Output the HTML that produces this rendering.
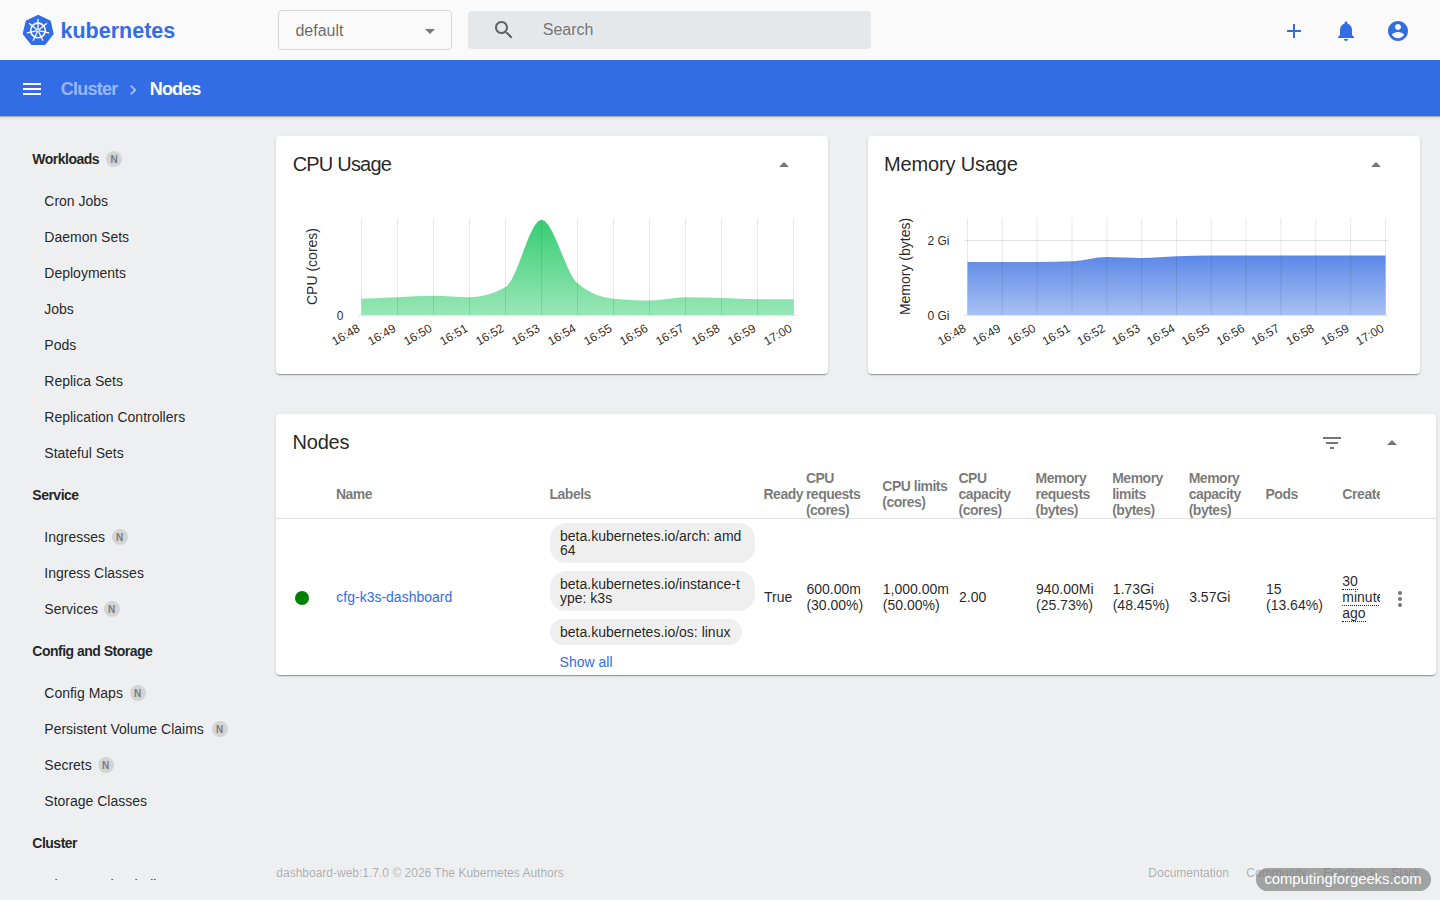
<!DOCTYPE html>
<html><head><meta charset="utf-8"><style>
html,body{margin:0;padding:0;width:1440px;height:900px;overflow:hidden;background:#eeeff1;font-family:"Liberation Sans", sans-serif;}
.t{position:absolute;white-space:nowrap;line-height:1;}
.badge{position:absolute;width:16px;height:16px;border-radius:50%;background:#d3d4d6;color:#7a7a7a;font-size:10px;font-weight:700;line-height:18px;box-sizing:border-box;overflow:hidden;text-align:center;}
</style></head><body>
<div style="position:absolute;left:0px;top:0px;width:1440px;height:60px;background:#fafafa"></div>
<svg style="position:absolute;left:0px;top:0px;" width="60" height="60" viewBox="0 0 60 60"><path d="M38.20,16.00 L49.61,21.50 L52.43,33.85 L44.53,43.75 L31.87,43.75 L23.97,33.85 L26.79,21.50Z" fill="#326de6" stroke="#326de6" stroke-width="2.4" stroke-linejoin="round"/><circle cx="38" cy="30.4" r="7.3" fill="none" stroke="#fff" stroke-width="1.6"/><line x1="38.00" y1="28.40" x2="38.00" y2="19.40" stroke="#fff" stroke-width="1.3" stroke-linecap="round"/><line x1="39.56" y1="29.15" x2="46.60" y2="23.54" stroke="#fff" stroke-width="1.3" stroke-linecap="round"/><line x1="39.95" y1="30.85" x2="48.72" y2="32.85" stroke="#fff" stroke-width="1.3" stroke-linecap="round"/><line x1="38.87" y1="32.20" x2="42.77" y2="40.31" stroke="#fff" stroke-width="1.3" stroke-linecap="round"/><line x1="37.13" y1="32.20" x2="33.23" y2="40.31" stroke="#fff" stroke-width="1.3" stroke-linecap="round"/><line x1="36.05" y1="30.85" x2="27.28" y2="32.85" stroke="#fff" stroke-width="1.3" stroke-linecap="round"/><line x1="36.44" y1="29.15" x2="29.40" y2="23.54" stroke="#fff" stroke-width="1.3" stroke-linecap="round"/><circle cx="38" cy="30.4" r="1.8" fill="#fff"/><circle cx="38" cy="30.4" r="0.8" fill="#326de6"/></svg>
<div class="t" style="left:60.5px;top:21.00px;font-size:21.5px;font-weight:700;color:#326de6;letter-spacing:0px;">kubernetes</div>
<div style="position:absolute;left:278px;top:10px;width:172px;height:38px;border:1px solid #d6d6d6;border-radius:4px;background:#fafafa"></div>
<div class="t" style="left:295.4px;top:23.00px;font-size:16px;font-weight:400;color:rgba(0,0,0,.6);letter-spacing:0px;">default</div>
<svg style="position:absolute;left:425px;top:29px;" width="10" height="5" viewBox="0 0 10 5"><path d="M0 0L10 0L5 5Z" fill="#777"/></svg>
<div style="position:absolute;left:468px;top:11px;width:403px;height:38px;background:#e4e8ea;border-radius:4px"></div>
<svg style="position:absolute;left:492px;top:18px;" width="24" height="24" viewBox="0 0 24 24"><path fill="#616161" d="M15.5 14h-.79l-.28-.27C15.41 12.59 16 11.11 16 9.5 16 5.91 13.09 3 9.5 3S3 5.91 3 9.5 5.91 16 9.5 16c1.61 0 3.09-.59 4.23-1.57l.27.28v.79l5 4.99L20.49 19l-4.99-5zm-6 0C7.01 14 5 11.99 5 9.5S7.01 5 9.5 5 14 7.01 14 9.5 11.99 14 9.5 14z"/></svg>
<div class="t" style="left:542.8px;top:22.00px;font-size:16px;font-weight:400;color:#757575;letter-spacing:0px;">Search</div>
<svg style="position:absolute;left:1282px;top:19px;" width="24" height="24" viewBox="0 0 24 24"><path fill="#326de6" d="M19 13h-6v6h-2v-6H5v-2h6V5h2v6h6v2z"/></svg>
<svg style="position:absolute;left:1334px;top:19px;" width="24" height="24" viewBox="0 0 24 24"><path fill="#326de6" d="M12 22c1.1 0 2-.9 2-2h-4c0 1.1.89 2 2 2zm6-6v-5c0-3.07-1.64-5.64-4.5-6.32V4c0-.83-.67-1.5-1.5-1.5s-1.5.67-1.5 1.5v.68C7.63 5.36 6 7.92 6 11v5l-2 2v1h16v-1l-2-2z"/></svg>
<svg style="position:absolute;left:1386px;top:19px;" width="24" height="24" viewBox="0 0 24 24"><path fill="#326de6" d="M12 2C6.48 2 2 6.48 2 12s4.48 10 10 10 10-4.48 10-10S17.52 2 12 2zm0 3c1.66 0 3 1.34 3 3s-1.34 3-3 3-3-1.34-3-3 1.34-3 3-3zm0 14.2c-2.5 0-4.71-1.28-6-3.22.03-1.99 4-3.08 6-3.08 1.99 0 5.97 1.09 6 3.08-1.29 1.94-3.5 3.22-6 3.22z"/></svg>
<div style="position:absolute;left:0px;top:60px;width:1440px;height:56px;background:#326de6;z-index:2"></div>
<div style="position:absolute;left:0px;top:116px;width:1440px;height:4px;background:linear-gradient(rgba(0,0,0,.4),rgba(0,0,0,.1) 30%,rgba(0,0,0,.03) 65%,rgba(0,0,0,0));z-index:2"></div>
<svg style="position:absolute;left:20px;top:77px;z-index:4" width="24" height="24" viewBox="0 0 24 24"><path fill="#fff" d="M3 18h18v-2H3v2zm0-5h18v-2H3v2zm0-7v2h18V6H3z"/></svg>
<div class="t" style="left:60.8px;top:80.00px;font-size:18px;font-weight:700;color:rgba(255,255,255,.5);letter-spacing:-0.75px;z-index:4">Cluster</div>
<svg style="position:absolute;left:122.5px;top:79.5px;z-index:4" width="20" height="20" viewBox="0 0 24 24"><path fill="rgba(255,255,255,.6)" d="M10 6L8.59 7.41 13.17 12l-4.58 4.59L10 18l6-6z"/></svg>
<div class="t" style="left:149.8px;top:80.00px;font-size:18px;font-weight:700;color:#fff;letter-spacing:-0.9px;z-index:4">Nodes</div>
<div class="t" style="left:32.3px;top:152.00px;font-size:14px;font-weight:700;color:rgba(0,0,0,.87);letter-spacing:-0.5px;">Workloads</div>
<div class="badge" style="left:106.0px;top:151px">N</div>
<div class="t" style="left:44.3px;top:194.00px;font-size:14px;font-weight:400;color:rgba(0,0,0,.87);letter-spacing:0px;">Cron Jobs</div>
<div class="t" style="left:44.3px;top:230.00px;font-size:14px;font-weight:400;color:rgba(0,0,0,.87);letter-spacing:0px;">Daemon Sets</div>
<div class="t" style="left:44.3px;top:266.00px;font-size:14px;font-weight:400;color:rgba(0,0,0,.87);letter-spacing:0px;">Deployments</div>
<div class="t" style="left:44.3px;top:302.00px;font-size:14px;font-weight:400;color:rgba(0,0,0,.87);letter-spacing:0px;">Jobs</div>
<div class="t" style="left:44.3px;top:338.00px;font-size:14px;font-weight:400;color:rgba(0,0,0,.87);letter-spacing:0px;">Pods</div>
<div class="t" style="left:44.3px;top:374.00px;font-size:14px;font-weight:400;color:rgba(0,0,0,.87);letter-spacing:0px;">Replica Sets</div>
<div class="t" style="left:44.3px;top:410.00px;font-size:14px;font-weight:400;color:rgba(0,0,0,.87);letter-spacing:0px;">Replication Controllers</div>
<div class="t" style="left:44.3px;top:446.00px;font-size:14px;font-weight:400;color:rgba(0,0,0,.87);letter-spacing:0px;">Stateful Sets</div>
<div class="t" style="left:32.3px;top:488.00px;font-size:14px;font-weight:700;color:rgba(0,0,0,.87);letter-spacing:-0.5px;">Service</div>
<div class="t" style="left:44.3px;top:530.00px;font-size:14px;font-weight:400;color:rgba(0,0,0,.87);letter-spacing:0px;">Ingresses</div>
<div class="badge" style="left:111.5px;top:529px">N</div>
<div class="t" style="left:44.3px;top:566.00px;font-size:14px;font-weight:400;color:rgba(0,0,0,.87);letter-spacing:0px;">Ingress Classes</div>
<div class="t" style="left:44.3px;top:602.00px;font-size:14px;font-weight:400;color:rgba(0,0,0,.87);letter-spacing:0px;">Services</div>
<div class="badge" style="left:103.5px;top:601px">N</div>
<div class="t" style="left:32.3px;top:644.00px;font-size:14px;font-weight:700;color:rgba(0,0,0,.87);letter-spacing:-0.5px;">Config and Storage</div>
<div class="t" style="left:44.3px;top:686.00px;font-size:14px;font-weight:400;color:rgba(0,0,0,.87);letter-spacing:0px;">Config Maps</div>
<div class="badge" style="left:129.7px;top:685px">N</div>
<div class="t" style="left:44.3px;top:722.00px;font-size:14px;font-weight:400;color:rgba(0,0,0,.87);letter-spacing:0px;">Persistent Volume Claims</div>
<div class="badge" style="left:211.5px;top:721px">N</div>
<div class="t" style="left:44.3px;top:758.00px;font-size:14px;font-weight:400;color:rgba(0,0,0,.87);letter-spacing:0px;">Secrets</div>
<div class="badge" style="left:97.7px;top:757px">N</div>
<div class="t" style="left:44.3px;top:794.00px;font-size:14px;font-weight:400;color:rgba(0,0,0,.87);letter-spacing:0px;">Storage Classes</div>
<div class="t" style="left:32.3px;top:836.00px;font-size:14px;font-weight:700;color:rgba(0,0,0,.87);letter-spacing:-0.5px;">Cluster</div>
<div style="position:absolute;left:0;top:0;width:260px;height:880px;overflow:hidden;pointer-events:none">
<div class="t" style="left:44.3px;top:878.00px;font-size:14px;font-weight:400;color:rgba(0,0,0,.87);letter-spacing:0px;">Cluster Role Bindings</div>
</div>
<div style="position:absolute;left:276px;top:136px;width:552px;height:238px;background:#fff;border-radius:4px;box-shadow:0 2px 1px -1px rgba(0,0,0,.2),0 1px 1px 0 rgba(0,0,0,.14),0 1px 3px 0 rgba(0,0,0,.12)"></div>
<div style="position:absolute;left:868px;top:136px;width:552px;height:238px;background:#fff;border-radius:4px;box-shadow:0 2px 1px -1px rgba(0,0,0,.2),0 1px 1px 0 rgba(0,0,0,.14),0 1px 3px 0 rgba(0,0,0,.12)"></div>
<div style="position:absolute;left:276px;top:414px;width:1160px;height:261px;background:#fff;border-radius:4px;box-shadow:0 2px 1px -1px rgba(0,0,0,.2),0 1px 1px 0 rgba(0,0,0,.14),0 1px 3px 0 rgba(0,0,0,.12)"></div>
<div class="t" style="left:292.7px;top:154.00px;font-size:20px;font-weight:400;color:rgba(0,0,0,.87);letter-spacing:-0.8px;">CPU Usage</div>
<div class="t" style="left:884.0px;top:154.00px;font-size:20px;font-weight:400;color:rgba(0,0,0,.87);letter-spacing:-0.15px;">Memory Usage</div>
<svg style="position:absolute;left:772px;top:153px;" width="24" height="24" viewBox="0 0 24 24"><path fill="#757575" d="M7 14l5-5 5 5z"/></svg>
<svg style="position:absolute;left:1364px;top:153px;" width="24" height="24" viewBox="0 0 24 24"><path fill="#757575" d="M7 14l5-5 5 5z"/></svg>
<svg style="position:absolute;left:0px;top:0px;z-index:1;pointer-events:none" width="1440" height="400" viewBox="0 0 1440 400"><defs><linearGradient id="gc" x1="0" y1="0" x2="0" y2="1" gradientUnits="objectBoundingBox"><stop offset="0" stop-color="#38cc73"/><stop offset="1" stop-color="#98e7b7"/></linearGradient><linearGradient id="gm" x1="0" y1="0" x2="0" y2="1"><stop offset="0" stop-color="#5b88e6"/><stop offset="1" stop-color="#a9c1f3"/></linearGradient></defs><path d="M361.50,298.70C373.50,298.19 385.50,297.68 397.50,297.20C409.50,296.72 421.50,295.80 433.50,295.80C445.50,295.80 457.50,297.20 469.50,297.20C481.50,297.20 493.50,293.80 505.50,287.00C517.50,280.20 529.50,220.00 541.50,220.00C553.50,220.00 565.50,273.03 577.50,283.30C589.50,293.57 601.50,297.50 613.50,298.70C625.50,299.90 637.50,300.50 649.50,300.50C661.50,300.50 673.50,297.20 685.50,297.20C697.50,297.20 709.50,297.67 721.50,298.00C733.50,298.33 745.50,299.20 757.50,299.20C769.50,299.20 781.50,299.20 793.50,299.20L793.5,315.5L361.5,315.5Z" fill="url(#gc)"/><line x1="361.5" y1="218" x2="361.5" y2="315.5" stroke="rgba(0,0,0,.095)" stroke-width="1"/><line x1="397.5" y1="218" x2="397.5" y2="315.5" stroke="rgba(0,0,0,.095)" stroke-width="1"/><line x1="433.5" y1="218" x2="433.5" y2="315.5" stroke="rgba(0,0,0,.095)" stroke-width="1"/><line x1="469.5" y1="218" x2="469.5" y2="315.5" stroke="rgba(0,0,0,.095)" stroke-width="1"/><line x1="505.5" y1="218" x2="505.5" y2="315.5" stroke="rgba(0,0,0,.095)" stroke-width="1"/><line x1="541.5" y1="218" x2="541.5" y2="315.5" stroke="rgba(0,0,0,.095)" stroke-width="1"/><line x1="577.5" y1="218" x2="577.5" y2="315.5" stroke="rgba(0,0,0,.095)" stroke-width="1"/><line x1="613.5" y1="218" x2="613.5" y2="315.5" stroke="rgba(0,0,0,.095)" stroke-width="1"/><line x1="649.5" y1="218" x2="649.5" y2="315.5" stroke="rgba(0,0,0,.095)" stroke-width="1"/><line x1="685.5" y1="218" x2="685.5" y2="315.5" stroke="rgba(0,0,0,.095)" stroke-width="1"/><line x1="721.5" y1="218" x2="721.5" y2="315.5" stroke="rgba(0,0,0,.095)" stroke-width="1"/><line x1="757.5" y1="218" x2="757.5" y2="315.5" stroke="rgba(0,0,0,.095)" stroke-width="1"/><line x1="793.5" y1="218" x2="793.5" y2="315.5" stroke="rgba(0,0,0,.095)" stroke-width="1"/><line x1="358" y1="315.5" x2="797" y2="315.5" stroke="#e6e6e6" stroke-width="1"/><text x="359.2" y="328" transform="rotate(-30 359.2 328)" text-anchor="end" font-size="12" font-family="Liberation Sans" fill="rgba(0,0,0,.87)" dominant-baseline="middle">16:48</text><text x="395.2" y="328" transform="rotate(-30 395.2 328)" text-anchor="end" font-size="12" font-family="Liberation Sans" fill="rgba(0,0,0,.87)" dominant-baseline="middle">16:49</text><text x="431.2" y="328" transform="rotate(-30 431.2 328)" text-anchor="end" font-size="12" font-family="Liberation Sans" fill="rgba(0,0,0,.87)" dominant-baseline="middle">16:50</text><text x="467.2" y="328" transform="rotate(-30 467.2 328)" text-anchor="end" font-size="12" font-family="Liberation Sans" fill="rgba(0,0,0,.87)" dominant-baseline="middle">16:51</text><text x="503.2" y="328" transform="rotate(-30 503.2 328)" text-anchor="end" font-size="12" font-family="Liberation Sans" fill="rgba(0,0,0,.87)" dominant-baseline="middle">16:52</text><text x="539.2" y="328" transform="rotate(-30 539.2 328)" text-anchor="end" font-size="12" font-family="Liberation Sans" fill="rgba(0,0,0,.87)" dominant-baseline="middle">16:53</text><text x="575.2" y="328" transform="rotate(-30 575.2 328)" text-anchor="end" font-size="12" font-family="Liberation Sans" fill="rgba(0,0,0,.87)" dominant-baseline="middle">16:54</text><text x="611.2" y="328" transform="rotate(-30 611.2 328)" text-anchor="end" font-size="12" font-family="Liberation Sans" fill="rgba(0,0,0,.87)" dominant-baseline="middle">16:55</text><text x="647.2" y="328" transform="rotate(-30 647.2 328)" text-anchor="end" font-size="12" font-family="Liberation Sans" fill="rgba(0,0,0,.87)" dominant-baseline="middle">16:56</text><text x="683.2" y="328" transform="rotate(-30 683.2 328)" text-anchor="end" font-size="12" font-family="Liberation Sans" fill="rgba(0,0,0,.87)" dominant-baseline="middle">16:57</text><text x="719.2" y="328" transform="rotate(-30 719.2 328)" text-anchor="end" font-size="12" font-family="Liberation Sans" fill="rgba(0,0,0,.87)" dominant-baseline="middle">16:58</text><text x="755.2" y="328" transform="rotate(-30 755.2 328)" text-anchor="end" font-size="12" font-family="Liberation Sans" fill="rgba(0,0,0,.87)" dominant-baseline="middle">16:59</text><text x="791.2" y="328" transform="rotate(-30 791.2 328)" text-anchor="end" font-size="12" font-family="Liberation Sans" fill="rgba(0,0,0,.87)" dominant-baseline="middle">17:00</text><text x="343.5" y="317" text-anchor="end" font-size="12" font-family="Liberation Sans" fill="rgba(0,0,0,.87)" dominant-baseline="middle">0</text><text x="0" y="0" transform="translate(317 266.5) rotate(-90)" text-anchor="middle" font-size="14" font-family="Liberation Sans" fill="rgba(0,0,0,.87)">CPU (cores)</text><path d="M967.50,262.00C979.11,262.00 990.72,262.00 1002.33,262.00C1013.94,262.00 1025.56,262.00 1037.17,262.00C1048.78,262.00 1060.39,261.77 1072.00,261.30C1083.61,260.83 1095.22,257.00 1106.83,257.00C1118.44,257.00 1130.06,258.00 1141.67,258.00C1153.28,258.00 1164.89,256.62 1176.50,256.20C1188.11,255.78 1199.72,255.50 1211.33,255.50C1222.94,255.50 1234.56,255.50 1246.17,255.50C1257.78,255.50 1269.39,255.50 1281.00,255.50C1292.61,255.50 1304.22,255.50 1315.83,255.50C1327.44,255.50 1339.06,255.50 1350.67,255.50C1362.28,255.50 1373.89,255.50 1385.50,255.50L1385.5,315.5L967.5,315.5Z" fill="url(#gm)"/><line x1="967.50" y1="218" x2="967.50" y2="315.5" stroke="rgba(0,0,0,.095)" stroke-width="1"/><line x1="1002.33" y1="218" x2="1002.33" y2="315.5" stroke="rgba(0,0,0,.095)" stroke-width="1"/><line x1="1037.17" y1="218" x2="1037.17" y2="315.5" stroke="rgba(0,0,0,.095)" stroke-width="1"/><line x1="1072.00" y1="218" x2="1072.00" y2="315.5" stroke="rgba(0,0,0,.095)" stroke-width="1"/><line x1="1106.83" y1="218" x2="1106.83" y2="315.5" stroke="rgba(0,0,0,.095)" stroke-width="1"/><line x1="1141.67" y1="218" x2="1141.67" y2="315.5" stroke="rgba(0,0,0,.095)" stroke-width="1"/><line x1="1176.50" y1="218" x2="1176.50" y2="315.5" stroke="rgba(0,0,0,.095)" stroke-width="1"/><line x1="1211.33" y1="218" x2="1211.33" y2="315.5" stroke="rgba(0,0,0,.095)" stroke-width="1"/><line x1="1246.17" y1="218" x2="1246.17" y2="315.5" stroke="rgba(0,0,0,.095)" stroke-width="1"/><line x1="1281.00" y1="218" x2="1281.00" y2="315.5" stroke="rgba(0,0,0,.095)" stroke-width="1"/><line x1="1315.83" y1="218" x2="1315.83" y2="315.5" stroke="rgba(0,0,0,.095)" stroke-width="1"/><line x1="1350.67" y1="218" x2="1350.67" y2="315.5" stroke="rgba(0,0,0,.095)" stroke-width="1"/><line x1="1385.50" y1="218" x2="1385.50" y2="315.5" stroke="rgba(0,0,0,.095)" stroke-width="1"/><line x1="964" y1="240.5" x2="1388.5" y2="240.5" stroke="rgba(0,0,0,.1)" stroke-width="1"/><line x1="964" y1="315.5" x2="1388.5" y2="315.5" stroke="#e6e6e6" stroke-width="1"/><text x="965.20" y="328" transform="rotate(-30 965.20 328)" text-anchor="end" font-size="12" font-family="Liberation Sans" fill="rgba(0,0,0,.87)" dominant-baseline="middle">16:48</text><text x="1000.03" y="328" transform="rotate(-30 1000.03 328)" text-anchor="end" font-size="12" font-family="Liberation Sans" fill="rgba(0,0,0,.87)" dominant-baseline="middle">16:49</text><text x="1034.87" y="328" transform="rotate(-30 1034.87 328)" text-anchor="end" font-size="12" font-family="Liberation Sans" fill="rgba(0,0,0,.87)" dominant-baseline="middle">16:50</text><text x="1069.70" y="328" transform="rotate(-30 1069.70 328)" text-anchor="end" font-size="12" font-family="Liberation Sans" fill="rgba(0,0,0,.87)" dominant-baseline="middle">16:51</text><text x="1104.53" y="328" transform="rotate(-30 1104.53 328)" text-anchor="end" font-size="12" font-family="Liberation Sans" fill="rgba(0,0,0,.87)" dominant-baseline="middle">16:52</text><text x="1139.37" y="328" transform="rotate(-30 1139.37 328)" text-anchor="end" font-size="12" font-family="Liberation Sans" fill="rgba(0,0,0,.87)" dominant-baseline="middle">16:53</text><text x="1174.20" y="328" transform="rotate(-30 1174.20 328)" text-anchor="end" font-size="12" font-family="Liberation Sans" fill="rgba(0,0,0,.87)" dominant-baseline="middle">16:54</text><text x="1209.03" y="328" transform="rotate(-30 1209.03 328)" text-anchor="end" font-size="12" font-family="Liberation Sans" fill="rgba(0,0,0,.87)" dominant-baseline="middle">16:55</text><text x="1243.87" y="328" transform="rotate(-30 1243.87 328)" text-anchor="end" font-size="12" font-family="Liberation Sans" fill="rgba(0,0,0,.87)" dominant-baseline="middle">16:56</text><text x="1278.70" y="328" transform="rotate(-30 1278.70 328)" text-anchor="end" font-size="12" font-family="Liberation Sans" fill="rgba(0,0,0,.87)" dominant-baseline="middle">16:57</text><text x="1313.53" y="328" transform="rotate(-30 1313.53 328)" text-anchor="end" font-size="12" font-family="Liberation Sans" fill="rgba(0,0,0,.87)" dominant-baseline="middle">16:58</text><text x="1348.37" y="328" transform="rotate(-30 1348.37 328)" text-anchor="end" font-size="12" font-family="Liberation Sans" fill="rgba(0,0,0,.87)" dominant-baseline="middle">16:59</text><text x="1383.20" y="328" transform="rotate(-30 1383.20 328)" text-anchor="end" font-size="12" font-family="Liberation Sans" fill="rgba(0,0,0,.87)" dominant-baseline="middle">17:00</text><text x="949.5" y="241.5" text-anchor="end" font-size="12" font-family="Liberation Sans" fill="rgba(0,0,0,.87)" dominant-baseline="middle">2 Gi</text><text x="949.5" y="317" text-anchor="end" font-size="12" font-family="Liberation Sans" fill="rgba(0,0,0,.87)" dominant-baseline="middle">0 Gi</text><text x="0" y="0" transform="translate(909.5 266.5) rotate(-90)" text-anchor="middle" font-size="14" font-family="Liberation Sans" fill="rgba(0,0,0,.87)">Memory (bytes)</text></svg>
<div class="t" style="left:292.5px;top:432.00px;font-size:20px;font-weight:400;color:rgba(0,0,0,.87);letter-spacing:-0.2px;">Nodes</div>
<svg style="position:absolute;left:1320px;top:431px;" width="24" height="24" viewBox="0 0 24 24"><path fill="#757575" d="M10 18h4v-2h-4v2zM3 6v2h18V6H3zm3 7h12v-2H6v2z"/></svg>
<svg style="position:absolute;left:1380px;top:431px;" width="24" height="24" viewBox="0 0 24 24"><path fill="#757575" d="M7 14l5-5 5 5z"/></svg>
<div class="t" style="left:335.9px;top:487.00px;font-size:14px;font-weight:700;color:rgba(0,0,0,.54);letter-spacing:-0.5px;">Name</div>
<div class="t" style="left:549.5px;top:487.00px;font-size:14px;font-weight:700;color:rgba(0,0,0,.54);letter-spacing:-0.5px;">Labels</div>
<div class="t" style="left:763.5px;top:487.00px;font-size:14px;font-weight:700;color:rgba(0,0,0,.54);letter-spacing:-0.5px;">Ready</div>
<div class="t" style="left:805.9px;top:471.00px;font-size:14px;font-weight:700;color:rgba(0,0,0,.54);letter-spacing:-0.5px;">CPU</div>
<div class="t" style="left:805.9px;top:487.00px;font-size:14px;font-weight:700;color:rgba(0,0,0,.54);letter-spacing:-0.5px;">requests</div>
<div class="t" style="left:805.9px;top:503.00px;font-size:14px;font-weight:700;color:rgba(0,0,0,.54);letter-spacing:-0.5px;">(cores)</div>
<div class="t" style="left:882.3px;top:479.00px;font-size:14px;font-weight:700;color:rgba(0,0,0,.54);letter-spacing:-0.5px;">CPU limits</div>
<div class="t" style="left:882.3px;top:495.00px;font-size:14px;font-weight:700;color:rgba(0,0,0,.54);letter-spacing:-0.5px;">(cores)</div>
<div class="t" style="left:958.5px;top:471.00px;font-size:14px;font-weight:700;color:rgba(0,0,0,.54);letter-spacing:-0.5px;">CPU</div>
<div class="t" style="left:958.5px;top:487.00px;font-size:14px;font-weight:700;color:rgba(0,0,0,.54);letter-spacing:-0.5px;">capacity</div>
<div class="t" style="left:958.5px;top:503.00px;font-size:14px;font-weight:700;color:rgba(0,0,0,.54);letter-spacing:-0.5px;">(cores)</div>
<div class="t" style="left:1035.5px;top:471.00px;font-size:14px;font-weight:700;color:rgba(0,0,0,.54);letter-spacing:-0.5px;">Memory</div>
<div class="t" style="left:1035.5px;top:487.00px;font-size:14px;font-weight:700;color:rgba(0,0,0,.54);letter-spacing:-0.5px;">requests</div>
<div class="t" style="left:1035.5px;top:503.00px;font-size:14px;font-weight:700;color:rgba(0,0,0,.54);letter-spacing:-0.5px;">(bytes)</div>
<div class="t" style="left:1112.2px;top:471.00px;font-size:14px;font-weight:700;color:rgba(0,0,0,.54);letter-spacing:-0.5px;">Memory</div>
<div class="t" style="left:1112.2px;top:487.00px;font-size:14px;font-weight:700;color:rgba(0,0,0,.54);letter-spacing:-0.5px;">limits</div>
<div class="t" style="left:1112.2px;top:503.00px;font-size:14px;font-weight:700;color:rgba(0,0,0,.54);letter-spacing:-0.5px;">(bytes)</div>
<div class="t" style="left:1188.7px;top:471.00px;font-size:14px;font-weight:700;color:rgba(0,0,0,.54);letter-spacing:-0.5px;">Memory</div>
<div class="t" style="left:1188.7px;top:487.00px;font-size:14px;font-weight:700;color:rgba(0,0,0,.54);letter-spacing:-0.5px;">capacity</div>
<div class="t" style="left:1188.7px;top:503.00px;font-size:14px;font-weight:700;color:rgba(0,0,0,.54);letter-spacing:-0.5px;">(bytes)</div>
<div class="t" style="left:1265.5px;top:487.00px;font-size:14px;font-weight:700;color:rgba(0,0,0,.54);letter-spacing:-0.5px;">Pods</div>
<div style="position:absolute;left:1342px;top:460px;width:38px;height:60px;overflow:hidden">
<div class="t" style="left:0.3px;top:27.00px;font-size:14px;font-weight:700;color:rgba(0,0,0,.54);letter-spacing:-0.4px;">Created</div>
</div>
<div style="position:absolute;left:276px;top:518px;width:1160px;height:1px;background:#e0e0e0"></div>
<div style="position:absolute;left:295px;top:591px;width:14px;height:14px;background:#008000;border-radius:50%"></div>
<div class="t" style="left:336.3px;top:590.00px;font-size:14px;font-weight:400;color:#326de6;letter-spacing:0px;">cfg-k3s-dashboard</div>
<div style="position:absolute;left:550px;top:523px;width:205px;height:40px;background:#efefef;border-radius:16px"></div>
<div style="position:absolute;left:550px;top:571px;width:205px;height:40px;background:#efefef;border-radius:16px"></div>
<div style="position:absolute;left:550px;top:619px;width:192px;height:26px;background:#efefef;border-radius:16px"></div>
<div class="t" style="left:560.0px;top:529.00px;font-size:14px;font-weight:400;color:rgba(0,0,0,.87);letter-spacing:0px;">beta.kubernetes.io/arch: amd</div>
<div class="t" style="left:560.0px;top:543.00px;font-size:14px;font-weight:400;color:rgba(0,0,0,.87);letter-spacing:0px;">64</div>
<div class="t" style="left:560.0px;top:577.00px;font-size:14px;font-weight:400;color:rgba(0,0,0,.87);letter-spacing:0px;">beta.kubernetes.io/instance-t</div>
<div class="t" style="left:560.0px;top:591.00px;font-size:14px;font-weight:400;color:rgba(0,0,0,.87);letter-spacing:0px;">ype: k3s</div>
<div class="t" style="left:560.0px;top:625.00px;font-size:14px;font-weight:400;color:rgba(0,0,0,.87);letter-spacing:0px;">beta.kubernetes.io/os: linux</div>
<div class="t" style="left:559.6px;top:655.00px;font-size:14px;font-weight:400;color:#326de6;letter-spacing:0px;">Show all</div>
<div class="t" style="left:764.0px;top:590.00px;font-size:14px;font-weight:400;color:rgba(0,0,0,.87);letter-spacing:0px;">True</div>
<div class="t" style="left:806.4px;top:582.00px;font-size:14px;font-weight:400;color:rgba(0,0,0,.87);letter-spacing:0px;">600.00m</div>
<div class="t" style="left:806.4px;top:598.00px;font-size:14px;font-weight:400;color:rgba(0,0,0,.87);letter-spacing:0px;">(30.00%)</div>
<div class="t" style="left:882.8px;top:582.00px;font-size:14px;font-weight:400;color:rgba(0,0,0,.87);letter-spacing:0px;">1,000.00m</div>
<div class="t" style="left:882.8px;top:598.00px;font-size:14px;font-weight:400;color:rgba(0,0,0,.87);letter-spacing:0px;">(50.00%)</div>
<div class="t" style="left:959.0px;top:590.00px;font-size:14px;font-weight:400;color:rgba(0,0,0,.87);letter-spacing:0px;">2.00</div>
<div class="t" style="left:1036.0px;top:582.00px;font-size:14px;font-weight:400;color:rgba(0,0,0,.87);letter-spacing:0px;">940.00Mi</div>
<div class="t" style="left:1036.0px;top:598.00px;font-size:14px;font-weight:400;color:rgba(0,0,0,.87);letter-spacing:0px;">(25.73%)</div>
<div class="t" style="left:1112.7px;top:582.00px;font-size:14px;font-weight:400;color:rgba(0,0,0,.87);letter-spacing:0px;">1.73Gi</div>
<div class="t" style="left:1112.7px;top:598.00px;font-size:14px;font-weight:400;color:rgba(0,0,0,.87);letter-spacing:0px;">(48.45%)</div>
<div class="t" style="left:1189.2px;top:590.00px;font-size:14px;font-weight:400;color:rgba(0,0,0,.87);letter-spacing:0px;">3.57Gi</div>
<div class="t" style="left:1266.0px;top:582.00px;font-size:14px;font-weight:400;color:rgba(0,0,0,.87);letter-spacing:0px;">15</div>
<div class="t" style="left:1266.0px;top:598.00px;font-size:14px;font-weight:400;color:rgba(0,0,0,.87);letter-spacing:0px;">(13.64%)</div>
<div style="position:absolute;left:1342px;top:560px;width:38px;height:70px;overflow:hidden">
<div class="t" style="left:0.3px;top:14.00px;font-size:14px;font-weight:400;color:rgba(0,0,0,.87);letter-spacing:0px;"><span style="border-bottom:1px dotted rgba(0,0,0,.87)">30</span></div>
<div class="t" style="left:0.3px;top:30.00px;font-size:14px;font-weight:400;color:rgba(0,0,0,.87);letter-spacing:0px;"><span style="border-bottom:1px dotted rgba(0,0,0,.87)">minutes</span></div>
<div class="t" style="left:0.3px;top:46.00px;font-size:14px;font-weight:400;color:rgba(0,0,0,.87);letter-spacing:0px;"><span style="border-bottom:1px dotted rgba(0,0,0,.87)">ago</span></div>
</div>
<svg style="position:absolute;left:1388px;top:587px;" width="24" height="24" viewBox="0 0 24 24"><path fill="#757575" d="M12 8c1.1 0 2-.9 2-2s-.9-2-2-2-2 .9-2 2 .9 2 2 2zm0 2c-1.1 0-2 .9-2 2s.9 2 2 2 2-.9 2-2-.9-2-2-2zm0 6c-1.1 0-2 .9-2 2s.9 2 2 2 2-.9 2-2-.9-2-2-2z"/></svg>
<div class="t" style="left:276.3px;top:867.00px;font-size:12px;font-weight:400;color:rgba(0,0,0,.3);letter-spacing:0px;">dashboard-web:1.7.0 © 2026 The Kubernetes Authors</div>
<div class="t" style="left:1148.3px;top:867.00px;font-size:12px;font-weight:400;color:rgba(0,0,0,.3);letter-spacing:0px;">Documentation</div>
<div class="t" style="left:1246.3px;top:867.00px;font-size:12px;font-weight:400;color:rgba(0,0,0,.3);letter-spacing:0px;">Community</div>
<div class="t" style="left:1323.3px;top:867.00px;font-size:12px;font-weight:400;color:rgba(0,0,0,.3);letter-spacing:0px;">Feedback</div>
<div class="t" style="left:1391.0px;top:867.00px;font-size:12px;font-weight:400;color:rgba(0,0,0,.3);letter-spacing:0px;">Slack</div>
<div style="position:absolute;left:1256px;top:868px;width:175px;height:23px;background:rgba(120,120,120,.65);border-radius:12px;z-index:5"></div>
<div class="t" style="left:1264.4px;top:872.00px;font-size:14.8px;font-weight:400;color:#fff;letter-spacing:0px;z-index:6">computingforgeeks.com</div>
</body></html>
